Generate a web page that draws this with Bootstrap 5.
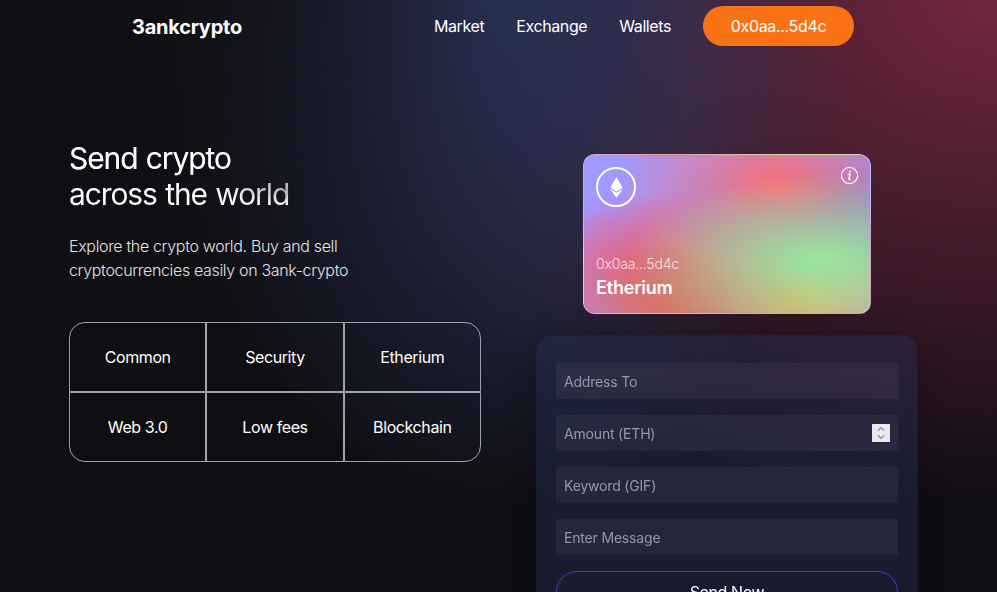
<!DOCTYPE html>
<html lang="en">
<head>
<meta charset="utf-8">
<meta name="viewport" content="width=device-width, initial-scale=1">
<title>3ankcrypto</title>
<link href="https://cdn.jsdelivr.net/npm/bootstrap@5.3.0/dist/css/bootstrap.min.css" rel="stylesheet">
<style>
body { font-family: Inter, "Liberation Sans", sans-serif; background: #0f0e13; color: #fff; }
.page {
  background-color: #0f0e13;
  background-image:
    radial-gradient(at 0% 0%, hsla(253,16%,7%,1) 0, transparent 50%),
    radial-gradient(at 50% 0%, hsla(225,39%,30%,1) 0, transparent 50%),
    radial-gradient(at 100% 0%, hsla(339,49%,30%,1) 0, transparent 50%);
  background-size: 100% 716px;
  background-repeat: no-repeat;
}
.topbar { padding: 6px 143px 0 132px; height: 46px; }
.brand { font-size: 20px; font-weight: 700; letter-spacing: -.25px; padding-top: 1px; }
.menu { gap: 32px; }
.menu a { letter-spacing: -.4px; }
.menu a.wallet { background: #f97316; width: 151px; height: 40px; letter-spacing: -.33px; }
.hero { padding: 94px 79px 0 69px; }
.intro { width: 412px; }
.headline {
  font-size: 30px; line-height: 36px; font-weight: 400; letter-spacing: -1.1px; word-spacing: 1px; margin: 0 0 22px;
  background-color: #fff;
  background-image: radial-gradient(at 4% 36%, #fff 0, transparent 53%), radial-gradient(at 100% 60%, #000 0, transparent 50%);
  -webkit-background-clip: text; background-clip: text; color: transparent;
}
.copy { font-weight: 300; line-height: 24px; letter-spacing: -.34px; margin-bottom: 40px; color: #e3e3e4; }
.features { display: grid; grid-template-columns: repeat(3, 1fr); grid-auto-rows: 70px; }
.features div { border: 1px solid #9ca3af; letter-spacing: -.4px; display: flex; align-items: center; justify-content: center; }
.features div:nth-child(1) { border-top-left-radius: 16px; }
.features div:nth-child(3) { border-top-right-radius: 16px; }
.features div:nth-child(4) { border-bottom-left-radius: 16px; }
.features div:nth-child(6) { border-bottom-right-radius: 16px; }
.panel-col { width: 382px; padding-top: 14px; }
.eth-card {
  width: 288px; height: 160px; padding: 12px 12px 11px; border-radius: 12px;
  border: 1px solid rgba(255,255,255,.3);
  background-color: #a099ff;
  background-image:
    radial-gradient(at 83% 67%, rgb(152,231,156) 0, transparent 58%),
    radial-gradient(at 67% 20%, hsla(357,94%,71%,1) 0, transparent 59%),
    radial-gradient(at 88% 35%, hsla(222,81%,65%,1) 0, transparent 50%),
    radial-gradient(at 31% 91%, hsla(9,61%,61%,1) 0, transparent 52%),
    radial-gradient(at 27% 71%, hsla(336,91%,65%,1) 0, transparent 49%),
    radial-gradient(at 74% 89%, hsla(30,98%,65%,1) 0, transparent 51%),
    radial-gradient(at 53% 75%, hsla(174,94%,68%,1) 0, transparent 45%);
}
.coin { width: 40px; height: 40px; border: 2px solid #fff; }
.info-icon { margin: -1px -1px 0 0; }
.addr { font-size: 14px; line-height: 20px; font-weight: 300; letter-spacing: -.18px; color: rgba(255,255,255,.8); }
.coin-name { font-size: 18px; line-height: 28px; font-weight: 600; letter-spacing: -.2px; }
.send-form {
  margin-top: 21px; padding: 27px 19px 19px; gap: 16px;
  border: 1px solid rgba(0,0,0,.06); border-radius: 16px;
  background: rgba(39,51,89,.4); box-shadow: 0 4px 30px rgba(0,0,0,.2);
  backdrop-filter: blur(5px);
}
.field { height: 36px; padding: 0 8px; border-radius: 2px; background: rgba(255,255,255,.05); color: #9498a5; font-size: 14px; letter-spacing: -.18px; }
.send-btn { height: 42px; border: 1px solid #4a37c8; letter-spacing: -.4px; flex: none; }
</style>
</head>
<body>
<div class="page vh-100 overflow-hidden">
  <nav class="topbar d-flex justify-content-between align-items-center">
    <span class="brand">3ankcrypto</span>
    <div class="menu d-flex align-items-center">
      <a class="text-white text-decoration-none" href="#">Market</a>
      <a class="text-white text-decoration-none" href="#">Exchange</a>
      <a class="text-white text-decoration-none" href="#">Wallets</a>
      <a class="wallet rounded-pill d-flex align-items-center justify-content-center text-white text-decoration-none" href="#">0x0aa...5d4c</a>
    </div>
  </nav>
  <main class="hero d-flex justify-content-between align-items-start">
    <section class="intro">
      <h1 class="headline">Send crypto<br>across the world</h1>
      <p class="copy">Explore the crypto world. Buy and sell<br>cryptocurrencies easily on 3ank-crypto</p>
      <div class="features">
        <div>Common</div><div>Security</div><div>Etherium</div>
        <div>Web 3.0</div><div>Low fees</div><div>Blockchain</div>
      </div>
    </section>
    <section class="panel-col">
      <div class="eth-card mx-auto d-flex flex-column justify-content-between">
        <div class="d-flex justify-content-between align-items-start">
          <div class="coin rounded-circle d-flex align-items-center justify-content-center">
            <svg width="21" height="21" viewBox="0 0 320 512" fill="#fff"><path d="M311.9 260.8L160 353.6 8 260.8 160 0l151.9 260.8zM160 383.4L8 290.6 160 512l152-221.4-152 92.8z"/></svg>
          </div>
          <svg class="info-icon" width="19" height="19" viewBox="0 0 19 19" fill="none" stroke="#fff" stroke-linecap="round"><circle cx="9.5" cy="9.5" r="8.1" stroke-width="1.1"/><circle cx="10.2" cy="5.4" r="1" fill="#fff" stroke="none"/><path d="M8.1 8.4c.7-.3 1.2-.4 1.9-.4l-1.2 4.8c-.1.7.5.8 1.5.2" stroke-width="1.2"/></svg>
        </div>
        <div>
          <div class="addr">0x0aa...5d4c</div>
          <div class="coin-name">Etherium</div>
        </div>
      </div>
      <div class="send-form d-flex flex-column">
        <div class="field d-flex align-items-center">Address To</div>
        <div class="field d-flex align-items-center justify-content-between">Amount (ETH)
          <svg width="18" height="18" viewBox="0 0 18 18"><path fill="#e9e8ee" d="M0 0h18v18H0z"/><path d="M6 6.5L9 3.8l3 2.7M6 11.5l3 2.7 3-2.7" fill="none" stroke="#8f8f97" stroke-width="1.4"/></svg>
        </div>
        <div class="field d-flex align-items-center">Keyword (GIF)</div>
        <div class="field d-flex align-items-center">Enter Message</div>
        <div class="send-btn rounded-pill d-flex align-items-center justify-content-center">Send Now</div>
      </div>
    </section>
  </main>
</div>
<script src="https://cdn.jsdelivr.net/npm/bootstrap@5.3.0/dist/js/bootstrap.bundle.min.js"></script>
</body>
</html>
